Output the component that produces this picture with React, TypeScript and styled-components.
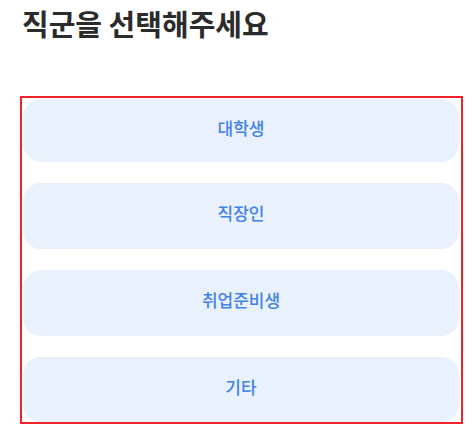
import React from "react";
import styled, { createGlobalStyle } from "styled-components";

const GlobalStyle = createGlobalStyle`
  html, body {
    margin: 0;
    padding: 0;
    background: #ffffff;
    font-family: "Noto Sans CJK KR", "Noto Sans", sans-serif;
  }
`;

const Page = styled.div`
  width: 475px;
  height: 439px;
  box-sizing: border-box;
  padding: 6px 12px 0 20px;
  display: flex;
  flex-direction: column;
`;

const Title = styled.h1`
  margin: 0 0 0 2px;
  font-size: 29px;
  line-height: 34px;
  font-weight: 700;
  color: #2b2b2b;
  letter-spacing: 0;
`;

const OptionBox = styled.div`
  margin-top: 56px;
  width: 443px;
  box-sizing: border-box;
  border: 2px solid #f0232b;
  padding: 1px 2px 0 1px;
  display: flex;
  flex-direction: column;
  gap: 21px;
`;

const OptionButton = styled.button<{ $h: number }>`
  height: ${(p) => p.$h}px;
  width: 100%;
  border: none;
  border-radius: 18px;
  background: #e9f1fd;
  color: #4382e8;
  font-family: "Noto Sans CJK KR", "Noto Sans", sans-serif;
  font-size: 17px;
  font-weight: 500;
  display: flex;
  align-items: center;
  justify-content: center;
  padding: 0 0 7px;
  cursor: pointer;
`;

const options = [
  { label: "대학생", h: 63 },
  { label: "직장인", h: 66 },
  { label: "취업준비생", h: 66 },
  { label: "기타", h: 65 },
];

export default function App() {
  return (
    <>
      <GlobalStyle />
      <Page>
        <Title>직군을 선택해주세요</Title>
        <OptionBox>
          {options.map((o) => (
            <OptionButton key={o.label} $h={o.h}>
              {o.label}
            </OptionButton>
          ))}
        </OptionBox>
      </Page>
    </>
  );
}
